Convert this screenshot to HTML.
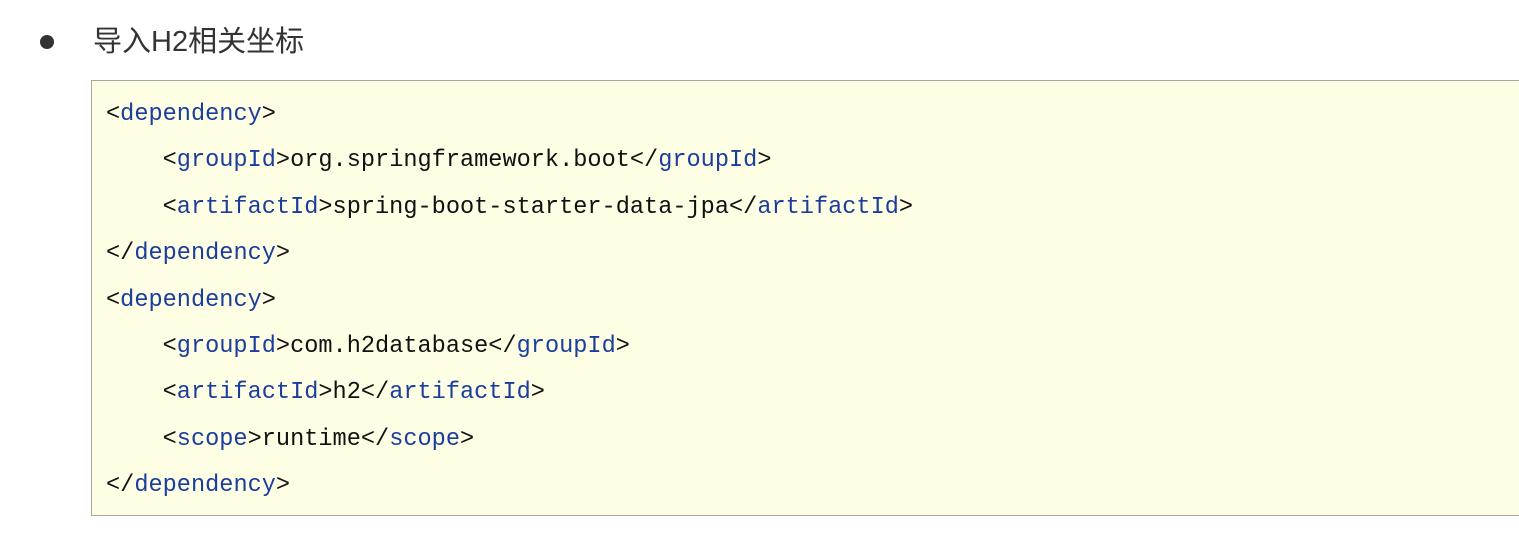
<!DOCTYPE html>
<html><head><meta charset="utf-8"><style>
body{margin:0;background:#fff;width:1519px;height:534px;overflow:hidden;position:relative}
.b{position:absolute;left:40px;top:35px;width:14px;height:14px;border-radius:50%;background:#333}
.h{position:absolute;left:93px;top:21px;font:29px "Liberation Sans","Noto Sans CJK SC",sans-serif;color:#333;line-height:42px}
.box{position:absolute;left:91px;top:80px;width:1440px;height:436px;box-sizing:border-box;border:1px solid #a8a8a0;background:#fefee5;padding:11px 0 0 14px}
pre{margin:0;font:23.6px/46.4px "Liberation Mono",monospace;color:#111}
i{font-style:normal;color:#1b3d9c}
</style></head><body>
<div class="b"></div>
<div class="h">导入H2相关坐标</div>
<div class="box"><pre>&lt;<i>dependency</i>&gt;
    &lt;<i>groupId</i>&gt;org.springframework.boot&lt;/<i>groupId</i>&gt;
    &lt;<i>artifactId</i>&gt;spring-boot-starter-data-jpa&lt;/<i>artifactId</i>&gt;
&lt;/<i>dependency</i>&gt;
&lt;<i>dependency</i>&gt;
    &lt;<i>groupId</i>&gt;com.h2database&lt;/<i>groupId</i>&gt;
    &lt;<i>artifactId</i>&gt;h2&lt;/<i>artifactId</i>&gt;
    &lt;<i>scope</i>&gt;runtime&lt;/<i>scope</i>&gt;
&lt;/<i>dependency</i>&gt;</pre></div>
</body></html>
